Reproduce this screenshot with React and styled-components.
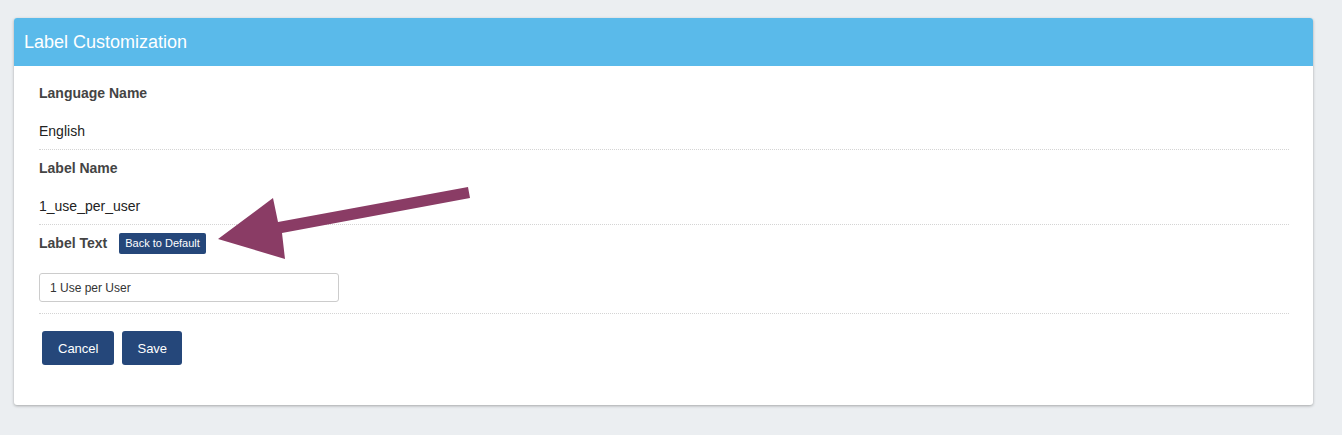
import React, { useState } from 'react'
import styled, { createGlobalStyle } from 'styled-components'

const GlobalStyle = createGlobalStyle`
  html, body {
    margin: 0;
    padding: 0;
    background: #ebeef1;
    font-family: "Liberation Sans", Arial, sans-serif;
  }
`

const Page = styled.div`
  position: relative;
  padding: 18px 29px 30px 14px;
`

const Panel = styled.div`
  background: #fff;
  border-radius: 3px;
  box-shadow: 0 1px 3px rgba(0, 0, 0, 0.3);
  overflow: hidden;
`

const PanelHeading = styled.div`
  height: 48px;
  display: flex;
  align-items: center;
  padding: 0 10px;
  background: #5abaea;
  color: #fff;
  font-size: 18px;
`

const PanelBody = styled.div`
  padding: 9px 24px 40px 25px;
`

const Section = styled.div`
  padding: 8px 0 ${(props) => props.bottom || 8}px;
  border-bottom: 1px dotted #d4d4d4;
`

const LabelRow = styled.div`
  display: flex;
  align-items: center;
  gap: 12px;
  height: 20px;
`

const Label = styled.label`
  font-size: 14px;
  font-weight: bold;
  color: #444;
`

const Value = styled.div`
  margin-top: 18px;
  height: 20px;
  line-height: 20px;
  font-size: 14px;
  color: #222;
`

const SmallButton = styled.button`
  height: 21px;
  padding: 0 6px;
  border: none;
  border-radius: 2px;
  background: #25477a;
  color: #fff;
  font-family: inherit;
  font-size: 11px;
`

const Input = styled.input`
  display: block;
  box-sizing: border-box;
  margin-top: 20px;
  width: 300px;
  height: 29px;
  padding: 0 10px;
  border: 1px solid #ccc;
  border-radius: 3px;
  font-family: inherit;
  font-size: 12px;
  color: #333;
`

const Actions = styled.div`
  display: flex;
  gap: 8px;
  padding: 17px 0 0 3px;
`

const Button = styled.button`
  height: 34px;
  padding: 0 ${(props) => props.pad || 16}px;
  border: none;
  border-radius: 3px;
  background: #25477a;
  color: #fff;
  font-family: inherit;
  font-size: 13px;
`

const Annotation = styled.svg`
  position: absolute;
  top: 0;
  left: 0;
  pointer-events: none;
`

const App = () => {
  const [text, setText] = useState('1 Use per User')

  return (
    <Page>
      <GlobalStyle />
      <Panel>
        <PanelHeading>Label Customization</PanelHeading>
        <PanelBody>
          <Section>
            <LabelRow>
              <Label>Language Name</Label>
            </LabelRow>
            <Value>English</Value>
          </Section>
          <Section>
            <LabelRow>
              <Label>Label Name</Label>
            </LabelRow>
            <Value>1_use_per_user</Value>
          </Section>
          <Section bottom={11}>
            <LabelRow>
              <Label>Label Text</Label>
              <SmallButton type="button">Back to Default</SmallButton>
            </LabelRow>
            <Input value={text} onChange={(e) => setText(e.target.value)} />
          </Section>
          <Actions>
            <Button type="button" pad={16}>
              Cancel
            </Button>
            <Button type="button" pad={15}>
              Save
            </Button>
          </Actions>
        </PanelBody>
      </Panel>
      <Annotation width="1342" height="435">
        <polygon
          points="218,239 273,198 278,222 468,187 470,198 282,233 285,259"
          fill="#8a3c65"
        />
      </Annotation>
    </Page>
  )
}

export default App
